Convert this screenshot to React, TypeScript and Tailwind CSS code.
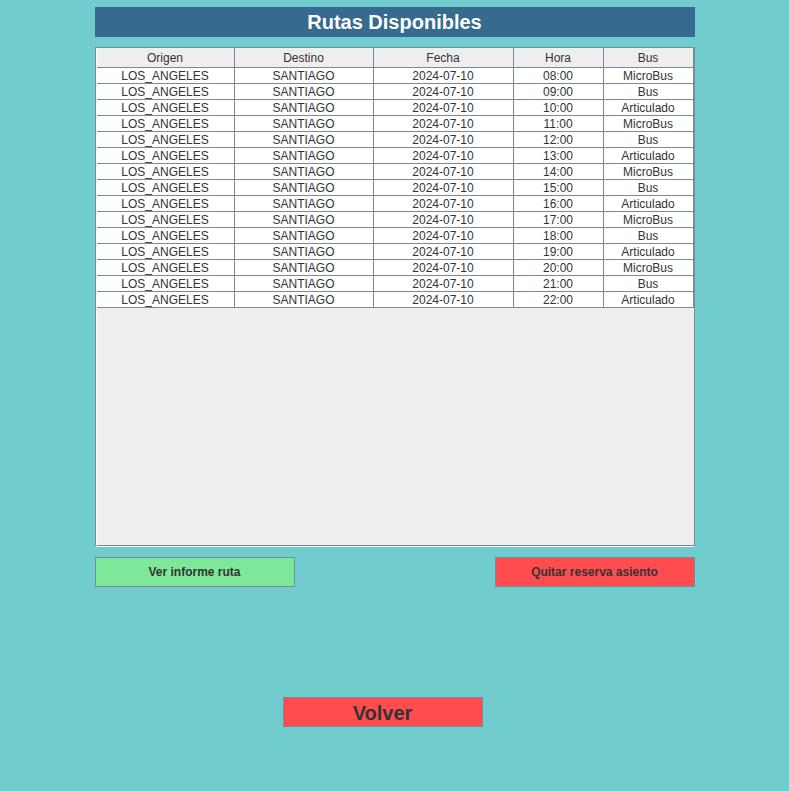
const columns = [
  { title: "Origen", width: "w-[138px]" },
  { title: "Destino", width: "w-[139px]" },
  { title: "Fecha", width: "w-[140px]" },
  { title: "Hora", width: "w-[90px]" },
  { title: "Bus", width: "w-[90px]" },
];

const buses = ["MicroBus", "Bus", "Articulado"];

const rows = Array.from({ length: 15 }, (_, i) => [
  "LOS_ANGELES",
  "SANTIAGO",
  "2024-07-10",
  `${String(8 + i).padStart(2, "0")}:00`,
  buses[i % 3],
]);

export default function App() {
  return (
    <div
      className="min-h-[791px] w-full bg-[#71cdcd] pt-[7px]"
      style={{ fontFamily: '"Liberation Sans", Arial, sans-serif' }}
    >
      <div className="mx-auto flex w-[600px] flex-col">
        <div className="flex h-[30px] items-center justify-center bg-[#366a8e] text-[20px] font-bold text-white">
          Rutas Disponibles
        </div>

        <div className="mt-[10px] h-[500px] border border-[#7a8a99] border-b-white bg-[#eeeeee]">
          <div className="h-full border-b border-l border-b-[#7a8a99] border-l-white">
            <div className="flex h-[20px] border-b border-[#7a8a99] bg-[#eeeeee]">
              {columns.map((c) => (
                <div
                  key={c.title}
                  className={`${c.width} flex items-center justify-center border-r border-[#7a8a99] pt-px text-[12px] text-[#333333]`}
                >
                  {c.title}
                </div>
              ))}
            </div>
            {rows.map((r, i) => (
              <div key={i} className="flex h-[16px] w-[597px] border-b border-[#7a8a99] bg-white">
                {r.map((v, j) => (
                  <div
                    key={j}
                    className={`${columns[j].width} flex items-center justify-center border-r border-[#7a8a99] text-[12px] leading-none text-[#333333]`}
                  >
                    {v}
                  </div>
                ))}
              </div>
            ))}
          </div>
        </div>

        <div className="mt-[10px] flex justify-between">
          <button className="h-[30px] w-[200px] border border-[#7a8a99] bg-[#7ee89a] text-[12px] font-bold text-[#333333]">
            Ver informe ruta
          </button>
          <button className="h-[30px] w-[200px] border border-[#7a8a99] bg-[#ff4c4f] text-[12px] font-bold text-[#333333]">
            Quitar reserva asiento
          </button>
        </div>

        <button className="ml-[188px] mt-[110px] h-[30px] w-[200px] border border-[#7a8a99] bg-[#ff4c4f] text-[20px] font-bold text-[#333333]">
          Volver
        </button>
      </div>
    </div>
  );
}
